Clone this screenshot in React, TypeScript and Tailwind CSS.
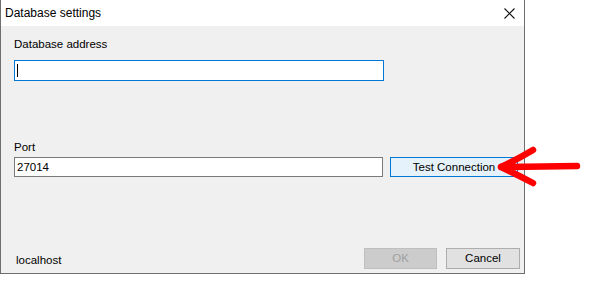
export default function App() {
  return (
    <div className="relative w-[605px] h-[291px] bg-white text-[11.5px] leading-[15px] text-black font-['Liberation_Sans',sans-serif]">
      <div className="w-[525px] h-[274px] flex flex-col border-x border-b border-[#6e6e6e]">
        {/* title bar */}
        <div className="h-[26px] bg-white flex items-center justify-between pl-[4px] pr-[9px] text-[12px]">
          <span>Database settings</span>
          <svg width="11" height="11" viewBox="0 0 11 11">
            <path d="M0.5 0.5 L10.5 10.5 M10.5 0.5 L0.5 10.5" stroke="#111" strokeWidth="1.1" />
          </svg>
        </div>

        <div className="flex-1 flex flex-col bg-[#f0f0f0]">
          <div className="pl-[13px] pt-[11px]">
            <div>Database address</div>
            <div className="mt-[8px] w-[370px] h-[21px] bg-white border border-[#0078d7] flex items-center pl-[2px]">
              <div className="w-px h-[13px] bg-black" />
            </div>
          </div>

          <div className="pl-[13px] mt-[59px]">
            <div>Port</div>
            <div className="mt-[2px] flex items-center gap-[7px]">
              <div className="w-[369px] h-[20px] bg-white border border-[#7a7a7a] flex items-center pl-[2px]">
                27014
              </div>
              <button className="w-[128px] h-[20px] bg-[#e5f1fb] border border-[#0078d7] flex items-center justify-center">
                Test Connection
              </button>
            </div>
          </div>

          <div className="flex-1 flex items-end justify-between pl-[15px] pr-[4px] pb-[4px]">
            <span className="mb-[1px]">localhost</span>
            <div className="flex gap-[9px]">
              <button className="w-[73px] h-[21px] bg-[#cccccc] border border-[#bfbfbf] text-[#a0a0a0] flex items-center justify-center">
                OK
              </button>
              <button className="w-[74px] h-[21px] bg-[#e1e1e1] border border-[#adadad] flex items-center justify-center">
                Cancel
              </button>
            </div>
          </div>
        </div>
      </div>

      {/* red annotation arrow */}
      <svg className="absolute left-[490px] top-[140px]" width="100" height="55" viewBox="0 0 100 55">
        <path
          d="M11 27 L87 26 M11 27 Q28 19 43 10 M11 27 Q28 35 43 43"
          stroke="#ff0000"
          strokeWidth="6.5"
          strokeLinecap="round"
          strokeLinejoin="round"
          fill="none"
        />
      </svg>
    </div>
  );
}
